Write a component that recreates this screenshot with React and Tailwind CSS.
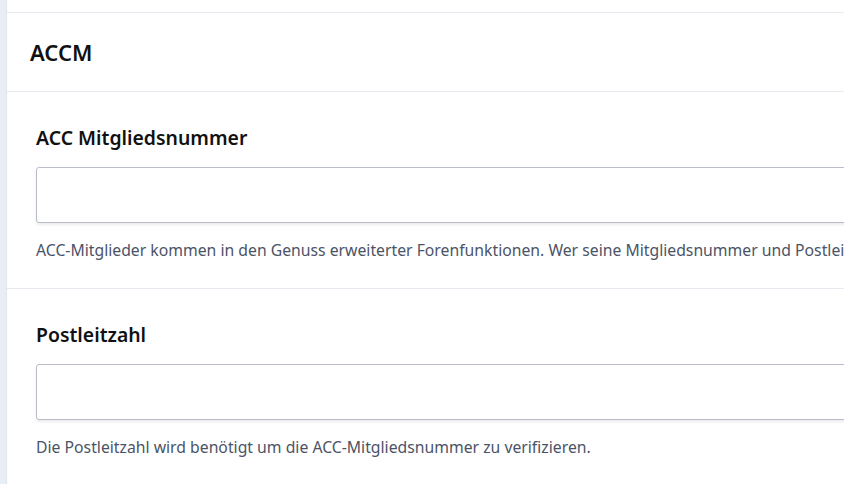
import React from "react";

const Field = ({ label, help }) => (
  <div className="pl-[29px] pt-[32px] pb-[27px]">
    <label className="block text-[19.4px] font-semibold text-[#111] leading-[28px] mb-[15px]">
      {label}
    </label>
    <input
      type="text"
      className="block w-[calc(100%+40px)] h-[56px] border border-[#b9bdc9] rounded-[3px] bg-white shadow-[0_2px_3px_rgba(0,0,0,0.08)] outline-none"
    />
    <p className="mt-[16px] text-[15.75px] leading-[22px] text-[#4b5366] whitespace-nowrap overflow-hidden">
      {help}
    </p>
  </div>
);

const App = () => {
  return (
    <div
      className="flex w-[844px] h-[484px] overflow-hidden bg-white"
      style={{ fontFamily: '"Noto Sans", "Open Sans", sans-serif' }}
    >
      <div className="w-[7px] shrink-0 bg-[#e9edf6] border-r border-[#dfe4ee]"></div>
      <div className="flex-1 min-w-0">
        <div className="h-[13px] border-b border-[#e6e9ef]"></div>
        <div className="h-[79px] flex items-center pl-[23px] border-b border-[#e6e9ef]">
          <h2 className="text-[22px] font-semibold text-[#111] pt-[1px]">ACCM</h2>
        </div>
        <div className="border-b border-[#e6e9ef]">
          <Field
            label="ACC Mitgliedsnummer"
            help="ACC-Mitglieder kommen in den Genuss erweiterter Forenfunktionen. Wer seine Mitgliedsnummer und Postleitzahl angibt, wird automatisch freigeschaltet."
          />
        </div>
        <Field
          label="Postleitzahl"
          help="Die Postleitzahl wird benötigt um die ACC-Mitgliedsnummer zu verifizieren."
        />
      </div>
    </div>
  );
};

export default App;
